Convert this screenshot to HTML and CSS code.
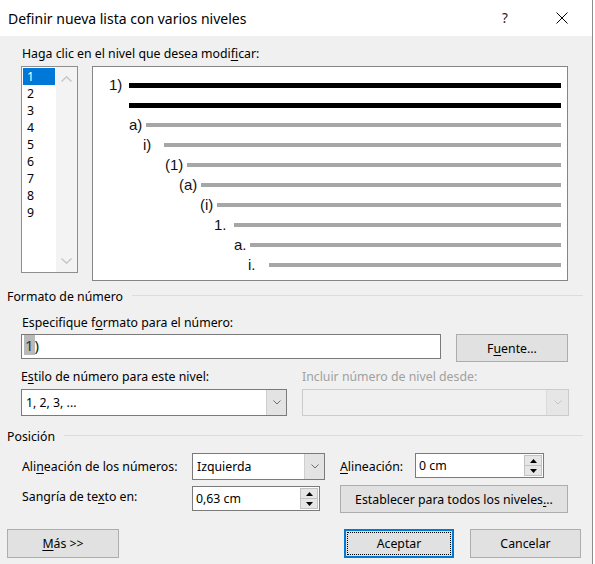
FILE: index.html
```html
<!DOCTYPE html>
<html lang="es">
<head>
<meta charset="utf-8">
<title>Definir nueva lista con varios niveles</title>
<link rel="stylesheet" href="styles.css">
</head>
<body>
<div class="dialog">
  <div class="titlebar">
    <span class="title">Definir nueva lista con varios niveles</span>
    <span class="help">?</span>
    <svg class="close" width="12" height="12" viewBox="0 0 12 12"><path d="M0.5 0.5 L11.5 11.5 M11.5 0.5 L0.5 11.5" stroke="#000" stroke-width="1" fill="none"/></svg>
  </div>
  <div class="content">
    <div class="lbl-top">Haga clic en el nivel que desea modi<u>f</u>icar:</div>
    <div class="picker">
      <div class="listbox">
        <div class="items">
          <div class="item selected">1</div>
          <div class="item">2</div>
          <div class="item">3</div>
          <div class="item">4</div>
          <div class="item">5</div>
          <div class="item">6</div>
          <div class="item">7</div>
          <div class="item">8</div>
          <div class="item">9</div>
        </div>
        <div class="scroll">
          <svg width="11" height="6" viewBox="0 0 11 6"><polyline points="0.5,5.5 5.5,0.8 10.5,5.5" fill="none" stroke="#c6c6c6" stroke-width="1.4"/></svg>
          <svg width="11" height="6" viewBox="0 0 11 6"><polyline points="0.5,0.5 5.5,5.2 10.5,0.5" fill="none" stroke="#c6c6c6" stroke-width="1.4"/></svg>
        </div>
      </div>
      <div class="preview">
        <div class="pv-row lv1"><span class="num">1)</span><span class="bar black"></span></div>
        <div class="pv-row lvc"><span class="bar black"></span></div>
        <div class="pv-row lv2"><span class="num">a)</span><span class="bar"></span></div>
        <div class="pv-row lv3"><span class="num">i)</span><span class="bar"></span></div>
        <div class="pv-row lv4"><span class="num">(1)</span><span class="bar"></span></div>
        <div class="pv-row lv5"><span class="num">(a)</span><span class="bar"></span></div>
        <div class="pv-row lv6"><span class="num">(i)</span><span class="bar"></span></div>
        <div class="pv-row lv7"><span class="num">1.</span><span class="bar"></span></div>
        <div class="pv-row lv8"><span class="num">a.</span><span class="bar"></span></div>
        <div class="pv-row lv9"><span class="num">i.</span><span class="bar"></span></div>
      </div>
    </div>

    <div class="sec sec-fmt">Formato de número</div>
    <div class="fmt">
      <div class="lbl lbl-spec">Especifique f<u>o</u>rmato para el número:</div>
      <div class="row-input">
        <div class="input"><span class="hl">1</span>)</div>
        <div class="btn btn-font">F<u>u</u>ente...</div>
      </div>
      <div class="row-labels">
        <div class="lbl lbl-style">E<u>s</u>tilo de número para este nivel:</div>
        <div class="lbl disabled">Incluir número de nivel desde:</div>
      </div>
      <div class="row-selects">
        <div class="select sel-style"><span class="val">1, 2, 3, ...</span><span class="dd"><svg width="8" height="5" viewBox="0 0 8 5"><polyline points="0.5,0.5 4,4 7.5,0.5" fill="none" stroke="#6d6d6d" stroke-width="1"/></svg></span></div>
        <div class="select sel-include disabled-box"><span class="val"></span><span class="dd"><svg width="8" height="5" viewBox="0 0 8 5"><polyline points="0.5,0.5 4,4 7.5,0.5" fill="none" stroke="#c4c4c4" stroke-width="1"/></svg></span></div>
      </div>
    </div>

    <div class="sec sec-pos">Posición</div>
    <div class="pos">
      <div class="lbl">Ali<u>n</u>eación de los números:</div>
      <div class="select sel-align"><span class="val">Izquierda</span><span class="dd"><svg width="8" height="5" viewBox="0 0 8 5"><polyline points="0.5,0.5 4,4 7.5,0.5" fill="none" stroke="#6d6d6d" stroke-width="1"/></svg></span></div>
      <div class="lbl"><u>A</u>lineación:</div>
      <div class="spinner sp-align"><span class="val">0 cm</span><span class="spin"><span class="sb"><svg width="7" height="4" viewBox="0 0 7 4"><polygon points="0,4 3.5,0 7,4" fill="#000"/></svg></span><span class="sb"><svg width="7" height="4" viewBox="0 0 7 4"><polygon points="0,0 3.5,4 7,0" fill="#000"/></svg></span></span></div>
      <div class="lbl lbl-indent">Sangría de te<u>x</u>to en:</div>
      <div class="spinner sp-indent"><span class="val">0,63 cm</span><span class="spin"><span class="sb"><svg width="7" height="4" viewBox="0 0 7 4"><polygon points="0,4 3.5,0 7,4" fill="#000"/></svg></span><span class="sb"><svg width="7" height="4" viewBox="0 0 7 4"><polygon points="0,0 3.5,4 7,0" fill="#000"/></svg></span></span></div>
      <div class="btn btn-all">Establecer para todos los niveles<u>.</u>..</div>
    </div>

    <div class="footer">
      <div class="btn btn-more"><u>M</u>ás &gt;&gt;</div>
      <div class="spacer"></div>
      <div class="btn btn-ok">Aceptar</div>
      <div class="btn btn-cancel">Cancelar</div>
    </div>
  </div>
</div>
</body>
</html>
```
FILE: styles.css
```css
html, body {
  margin: 0;
  padding: 0;
}
body {
  width: 595px;
  height: 564px;
  overflow: hidden;
  background: #ffffff;
  font-family: "Noto Sans", "Open Sans", sans-serif;
  font-size: 12.3px;
  color: #000;
}
u {
  text-decoration-thickness: 1px;
  text-underline-offset: 2px;
}
.dialog {
  width: 593px;
  height: 564px;
  box-sizing: border-box;
  border-right: 1px solid #8c8c8c;
  background: #f0f0f0;
}
.titlebar {
  height: 36px;
  background: #ffffff;
  display: flex;
  align-items: center;
}
.title {
  flex: 1;
  margin-left: 8px;
  font-size: 14px;
  color: #000;
}
.help {
  width: 10px;
  text-align: center;
  font-size: 13.5px;
  color: #222;
}
.close {
  margin-left: 46px;
  margin-right: 24px;
}
.content {
  padding-top: 10px;
}
.lbl-top {
  margin-left: 22px;
  height: 16px;
  line-height: 16px;
  white-space: nowrap;
}
.picker {
  display: flex;
  align-items: flex-start;
  margin-top: 4px;
  margin-left: 21px;
}
.listbox {
  width: 57px;
  height: 207px;
  box-sizing: border-box;
  border: 1px solid #8e8e8e;
  background: #fff;
  display: flex;
}
.items {
  width: 34px;
  box-sizing: border-box;
  padding: 1px 1px 0 1px;
}
.item {
  height: 17px;
  line-height: 17px;
  padding-left: 4px;
}
.item.selected {
  background: #0078d7;
  color: #fff;
}
.scroll {
  width: 21px;
  background: #f3f3f3;
  display: flex;
  flex-direction: column;
  justify-content: space-between;
  align-items: center;
  padding: 9px 0 8px 0;
  box-sizing: border-box;
}
.preview {
  margin-left: 14px;
  width: 476px;
  height: 215px;
  box-sizing: border-box;
  border: 1px solid #858585;
  background: #fff;
  padding: 8px 6px 0 0;
}
.pv-row {
  height: 20px;
  display: flex;
  align-items: center;
}
.num {
  flex: none;
  font-family: "Liberation Sans", Arial, sans-serif;
  font-size: 15px;
  color: #111;
  line-height: 20px;
}
.bar {
  flex: 1;
  height: 4px;
  background: #a6a6a6;
}
.bar.black {
  height: 5px;
  background: #000;
}
.lv1 { padding-left: 16px; }
.lv1 .num { width: 20px; }
.lvc { padding-left: 36px; }
.lv2 { padding-left: 36px; }
.lv2 .num { width: 17px; }
.lv3 { padding-left: 50px; }
.lv3 .num { width: 21px; }
.lv4 { padding-left: 72px; }
.lv4 .num { width: 22px; }
.lv5 { padding-left: 86px; }
.lv5 .num { width: 22px; }
.lv6 { padding-left: 107px; }
.lv6 .num { width: 17px; }
.lv7 { padding-left: 121px; }
.lv7 .num { width: 20px; }
.lv8 { padding-left: 141px; }
.lv8 .num { width: 16px; }
.lv9 { padding-left: 155px; }
.lv9 .num { width: 21px; }

.sec {
  display: flex;
  align-items: flex-start;
  padding-left: 7px;
  height: 16px;
  line-height: 16px;
}
.sec::after {
  content: "";
  flex: 1;
  height: 1px;
  margin-top: 6px;
  margin-left: 9px;
  margin-right: 9px;
  background: #dcdcdc;
}
.sec-fmt { margin-top: 8px; }
.sec-pos { margin-top: 13px; }

.fmt {
  padding-left: 21px;
}
.lbl {
  height: 16px;
  line-height: 16px;
  white-space: nowrap;
}
.lbl-spec {
  margin-top: 10px;
  padding-left: 1px;
}
.row-input {
  display: flex;
  align-items: flex-start;
  margin-top: 3px;
}
.input {
  width: 420px;
  height: 25px;
  box-sizing: border-box;
  border: 1px solid #7a7a7a;
  background: #fff;
  font-size: 15px;
  line-height: 21px;
  padding-left: 2px;
  color: #1a1a1a;
}
.hl {
  background: #b9b9b9;
  color: #333;
  padding: 0 1px;
}
.btn {
  box-sizing: border-box;
  background: #e1e1e1;
  border: 1px solid #adadad;
  display: flex;
  align-items: center;
  justify-content: center;
  color: #000;
  white-space: nowrap;
}
.btn-font {
  margin-left: 15px;
  width: 112px;
  height: 28px;
}
.row-labels {
  display: flex;
  margin-top: 7px;
}
.lbl-style {
  width: 281px;
}
.disabled {
  color: #a0a0a0;
}
.row-selects {
  display: flex;
  margin-top: 4px;
}
.select {
  height: 27px;
  box-sizing: border-box;
  border: 1px solid #7a7a7a;
  background: #fff;
  display: flex;
  align-items: stretch;
}
.select .val {
  flex: 1;
  display: flex;
  align-items: center;
  padding-left: 4px;
}
.select .dd {
  width: 19px;
  background: #e3e3e3;
  border-left: 1px solid #cfcfcf;
  display: flex;
  align-items: center;
  justify-content: center;
}
.sel-style {
  width: 266px;
}
.sel-include {
  width: 267px;
  margin-left: 15px;
}
.disabled-box {
  border-color: #cccccc;
  background: #f0f0f0;
}
.disabled-box .dd {
  width: 21px;
  background: #e6e6e6;
  border-left: 1px solid #dadada;
}

.pos {
  display: grid;
  grid-template-columns: 170px 148px 75px 153px;
  grid-template-rows: 27px 28px;
  row-gap: 5px;
  align-items: center;
  margin-top: 8px;
  padding-left: 22px;
}
.sel-align {
  width: 133px;
}
.sel-align .val {
  padding-left: 4px;
}
.spinner {
  height: 25px;
  box-sizing: border-box;
  border: 1px solid #7a7a7a;
  background: #fff;
  display: flex;
  align-items: stretch;
  align-self: start;
}
.spinner .val {
  flex: 1;
  display: flex;
  align-items: center;
  padding-left: 3px;
}
.spin {
  width: 18px;
  display: flex;
  flex-direction: column;
  padding: 1px 1px 1px 0;
}
.sb {
  flex: 1;
  box-sizing: border-box;
  background: #e6e6e6;
  border: 1px solid #c2c2c2;
  display: flex;
  align-items: center;
  justify-content: center;
}
.sb + .sb {
  border-top: none;
}
.sp-align {
  width: 129px;
}
.sp-indent {
  width: 128px;
  margin-top: 1px;
}
.lbl-indent {
  align-self: start;
  height: 24px;
  line-height: 24px;
}
.btn-all {
  grid-column: 3 / 5;
  height: 28px;
}

.footer {
  display: flex;
  margin-top: 16px;
  padding-left: 7px;
  padding-right: 11px;
}
.spacer {
  flex: 1;
}
.btn-more {
  width: 112px;
  height: 29px;
}
.btn-ok {
  width: 110px;
  height: 29px;
  border: 2px solid #0078d7;
  outline: 1px dotted #000;
  outline-offset: -4px;
}
.btn-cancel {
  width: 111px;
  height: 29px;
  margin-left: 16px;
}
```
